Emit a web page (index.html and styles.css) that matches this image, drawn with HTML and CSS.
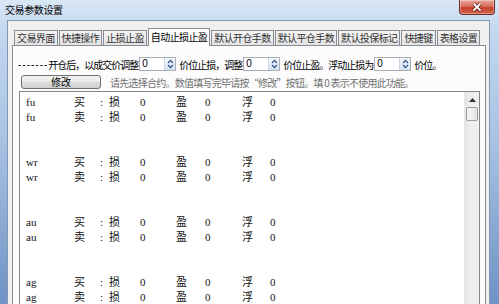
FILE: index.html
```html
<!DOCTYPE html>
<html lang="zh-CN">
<head>
  <meta charset="UTF-8">
  <title>交易参数设置</title>
  <link rel="stylesheet" href="styles.css">
</head>
<body>
  <div class="window">
    <div class="titlebar">
      <span class="title">交易参数设置</span>
      <div class="close">
        <svg width="12" height="10" viewBox="0 0 12 10">
          <path d="M2.5 1.5 L9.5 8.5 M9.5 1.5 L2.5 8.5" stroke="#5a1a12" stroke-width="3.4" fill="none"/>
          <path d="M2.5 1.5 L9.5 8.5 M9.5 1.5 L2.5 8.5" stroke="#fff" stroke-width="1.8" fill="none"/>
        </svg>
      </div>
    </div>

    <div class="client">
      <div class="tabs">
        <div class="tab">交易界面</div>
        <div class="tab">快捷操作</div>
        <div class="tab">止损止盈</div>
        <div class="tab active">自动止损止盈</div>
        <div class="tab">默认开仓手数</div>
        <div class="tab">默认平仓手数</div>
        <div class="tab">默认投保标记</div>
        <div class="tab">快捷键</div>
        <div class="tab">表格设置</div>
      </div>

      <div class="pane">
        <div class="setting-row">
          <span class="dashes">-------</span><span>开仓后，以成交价调整</span>
          <div class="spinbox">
            <span class="value">0</span>
            <div class="spin-btn">
              <svg width="9" height="12" viewBox="0 0 9 12"><path d="M2 5 L4.5 2.5 L7 5 M2 7 L4.5 9.5 L7 7" fill="none" stroke="#3a5c8c" stroke-width="1.3"/></svg>
            </div>
          </div>
          <span>价位止损，调整</span>
          <div class="spinbox">
            <span class="value">0</span>
            <div class="spin-btn">
              <svg width="9" height="12" viewBox="0 0 9 12"><path d="M2 5 L4.5 2.5 L7 5 M2 7 L4.5 9.5 L7 7" fill="none" stroke="#3a5c8c" stroke-width="1.3"/></svg>
            </div>
          </div>
          <span>价位止盈。浮动止损为</span>
          <div class="spinbox">
            <span class="value">0</span>
            <div class="spin-btn">
              <svg width="9" height="12" viewBox="0 0 9 12"><path d="M2 5 L4.5 2.5 L7 5 M2 7 L4.5 9.5 L7 7" fill="none" stroke="#3a5c8c" stroke-width="1.3"/></svg>
            </div>
          </div>
          <span>价位。</span>
        </div>

        <div class="action-row">
          <button class="btn">修改</button>
          <span class="hint">请先选择合约。数值填写完毕请按“修改”按钮。填 0 表示不使用此功能。</span>
        </div>

        <div class="listbox">
          <div class="rows">
            <div class="group">
              <div class="row"><span>fu</span><span>买</span><span>:</span><span>损</span><span>0</span><span>盈</span><span>0</span><span>浮</span><span>0</span></div>
              <div class="row"><span>fu</span><span>卖</span><span>:</span><span>损</span><span>0</span><span>盈</span><span>0</span><span>浮</span><span>0</span></div>
            </div>
            <div class="group">
              <div class="row"><span>wr</span><span>买</span><span>:</span><span>损</span><span>0</span><span>盈</span><span>0</span><span>浮</span><span>0</span></div>
              <div class="row"><span>wr</span><span>卖</span><span>:</span><span>损</span><span>0</span><span>盈</span><span>0</span><span>浮</span><span>0</span></div>
            </div>
            <div class="group">
              <div class="row"><span>au</span><span>买</span><span>:</span><span>损</span><span>0</span><span>盈</span><span>0</span><span>浮</span><span>0</span></div>
              <div class="row"><span>au</span><span>卖</span><span>:</span><span>损</span><span>0</span><span>盈</span><span>0</span><span>浮</span><span>0</span></div>
            </div>
            <div class="group">
              <div class="row"><span>ag</span><span>买</span><span>:</span><span>损</span><span>0</span><span>盈</span><span>0</span><span>浮</span><span>0</span></div>
              <div class="row"><span>ag</span><span>卖</span><span>:</span><span>损</span><span>0</span><span>盈</span><span>0</span><span>浮</span><span>0</span></div>
            </div>
          </div>
          <div class="scrollbar">
            <div class="arrow-up">
              <svg width="7" height="4" viewBox="0 0 7 4"><path d="M0 4 L3.5 0 L7 4 Z" fill="#333"/></svg>
            </div>
            <div class="thumb"></div>
          </div>
        </div>
      </div>
    </div>
  </div>
</body>
</html>
```

FILE: styles.css
```css
* {
  box-sizing: border-box;
}

body {
  margin: 0;
  width: 499px;
  height: 304px;
  overflow: hidden;
  font-family: "Noto Sans CJK SC", "Liberation Sans", sans-serif;
  font-size: 10px;
  color: #000;
  background: linear-gradient(180deg, #d9e7f5 0, #c4d8ee 30px, #a8c2e2 140px, #6f93c5 304px);
}

.window {
  display: flex;
  flex-direction: column;
  height: 304px;
}

/* title bar */
.titlebar {
  height: 21px;
  display: flex;
  align-items: flex-start;
  padding: 0 4px 0 5px;
}

.title {
  line-height: 20px;
  letter-spacing: -0.4px;
}

.close {
  margin-left: auto;
  width: 36px;
  height: 15px;
  border: 1px solid #6b2e2a;
  border-top: none;
  border-radius: 0 0 4px 4px;
  background: linear-gradient(#eba597, #d86f5c 45%, #c2402c 55%, #d2634b);
  box-shadow: inset 0 0 0 1px rgba(255, 255, 255, 0.35);
  display: flex;
  align-items: center;
  justify-content: center;
}

/* client area */
.client {
  flex: 1;
  margin: 0 9px 0 7px;
  background: #f0f0f0;
  border: 1px solid #8297b5;
  border-bottom: none;
  padding: 7px 3px 0 4px;
  display: flex;
  flex-direction: column;
}

.tabs {
  display: flex;
  align-items: flex-end;
  height: 17px;
  padding-left: 2px;
  position: relative;
  z-index: 1;
}

.tab {
  height: 15px;
  padding: 0 2px;
  margin-right: 1px;
  border: 1px solid #898c95;
  border-bottom: none;
  background: linear-gradient(#f4f4f4, #e3e3e3);
  line-height: 13px;
  letter-spacing: -0.6px;
  color: #333;
  white-space: nowrap;
}

.tab.active {
  height: 18px;
  margin-bottom: -1px;
  background: #fcfcfc;
  color: #000;
  line-height: 16px;
}

.pane {
  flex: 1;
  background: #fcfcfc;
  border: 1px solid #898c95;
  border-bottom: none;
  padding: 11px 5px 0 6px;
  display: flex;
  flex-direction: column;
}

/* first row with spin boxes */
.setting-row {
  display: flex;
  align-items: center;
  height: 14px;
  white-space: nowrap;
  letter-spacing: -1px;
}

.dashes {
  font-family: "Liberation Sans", sans-serif;
  letter-spacing: 1px;
  margin-left: -1px;
}

.spinbox {
  width: 37px;
  height: 14px;
  margin: 0 3px 0 1px;
  border: 1px solid #abadb3;
  background: #fff;
  display: flex;
  letter-spacing: 0;
}

.spinbox .value {
  flex: 1;
  padding-left: 2px;
  line-height: 12px;
  font-family: "Liberation Sans", sans-serif;
}

.spin-btn {
  width: 11px;
  display: flex;
  align-items: center;
  justify-content: center;
  background: linear-gradient(#f3f8fd, #d5e4f4);
  border-left: 1px solid #c9d6e6;
}

/* second row */
.action-row {
  display: flex;
  align-items: center;
  height: 14px;
  margin-top: 4px;
  white-space: nowrap;
}

.btn {
  width: 80px;
  height: 14px;
  margin-left: 2px;
  padding: 0;
  border: 1px solid #707070;
  border-radius: 3px;
  background: linear-gradient(#f2f2f2 0, #ebebeb 50%, #dddddd 50%, #cfcfcf 100%);
  font: inherit;
  line-height: 12px;
  color: #000;
}

.hint {
  margin-left: 9px;
  color: #707070;
  letter-spacing: -0.75px;
}

/* list box */
.listbox {
  flex: 1;
  margin-top: 2px;
  display: flex;
  border: 1px solid #828790;
  border-bottom: none;
  background: #fff;
}

.rows {
  flex: 1;
  padding: 3px 0 0 6px;
  font-family: "Liberation Serif", "Noto Sans CJK SC", serif;
  font-size: 11px;
  line-height: 15px;
  color: #111;
}

.group {
  margin-bottom: 30px;
}

.row {
  height: 15px;
  display: grid;
  grid-template-columns: 48px 26px 9px 31px 36px 29px 37px 28px auto;
}

.scrollbar {
  width: 15px;
  display: flex;
  flex-direction: column;
  background: linear-gradient(90deg, #e2e2e2, #eeeeee 30%, #f0f0f0);
  border-left: 1px solid #e8e8e8;
}

.arrow-up {
  height: 15px;
  display: flex;
  align-items: center;
  justify-content: center;
}

.thumb {
  height: 14px;
  margin: 0 1px;
  border: 1px solid #9b9b9b;
  border-radius: 2px;
  background: linear-gradient(90deg, #f6f6f6, #e4e4e4);
}
```
